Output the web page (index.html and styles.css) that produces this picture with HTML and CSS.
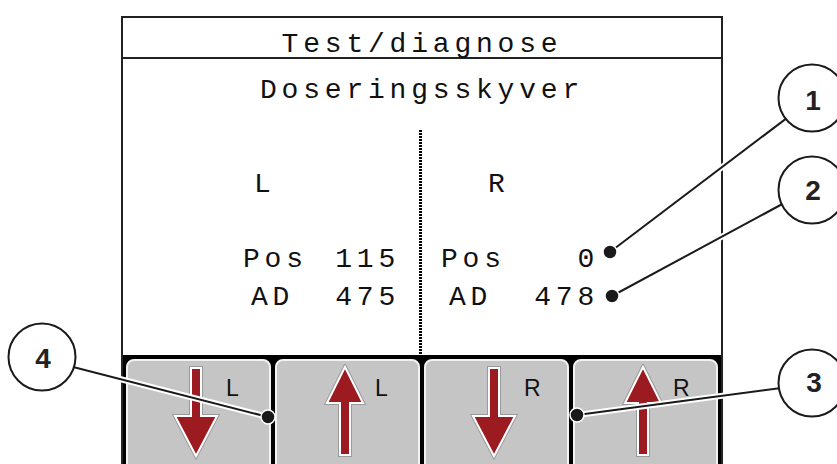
FILE: index.html
```html
<!DOCTYPE html>
<html lang="no">
<head>
<meta charset="utf-8">
<title>Test/diagnose - Doseringsskyver</title>
<link rel="stylesheet" href="styles.css">
</head>
<body>
<div id="page">
    <div id="screen">
        <div class="title">Test/diagnose</div>
        <div class="subtitle">Doseringsskyver</div>
        <div class="panes">
            <div class="pane left">
                <div class="side">L</div>
                <div class="row pos"><span>Pos</span><span>115</span></div>
                <div class="row ad"><span>AD</span><span>475</span></div>
            </div>
            <div class="divider"></div>
            <div class="pane right">
                <div class="side">R</div>
                <div class="row pos"><span>Pos</span><span>0</span></div>
                <div class="row ad"><span>AD</span><span>478</span></div>
            </div>
        </div>
        <div class="softkeys">
            <div class="key">
                <svg viewBox="0 0 48 96">
                    <polygon class="edge" points="19,4 29,4 29,52 45,52 24,92 3,52 19,52"/>
                    <polygon class="arrow" points="19,4 29,4 29,52 45,52 24,92 3,52 19,52"/>
                </svg>
                <span>L</span>
            </div>
            <div class="key">
                <svg viewBox="0 0 48 96">
                    <polygon class="edge" points="24,3 42,39 29,39 29,91 19,91 19,39 6,39"/>
                    <polygon class="arrow" points="24,3 42,39 29,39 29,91 19,91 19,39 6,39"/>
                </svg>
                <span>L</span>
            </div>
            <div class="key">
                <svg viewBox="0 0 48 96">
                    <polygon class="edge" points="19,4 29,4 29,52 45,52 24,92 3,52 19,52"/>
                    <polygon class="arrow" points="19,4 29,4 29,52 45,52 24,92 3,52 19,52"/>
                </svg>
                <span>R</span>
            </div>
            <div class="key">
                <svg viewBox="0 0 48 96">
                    <polygon class="edge" points="24,3 42,39 29,39 29,91 19,91 19,39 6,39"/>
                    <polygon class="arrow" points="24,3 42,39 29,39 29,91 19,91 19,39 6,39"/>
                </svg>
                <span>R</span>
            </div>
        </div>
    </div>

    <!-- nummererte henvisninger over skjermbildet -->
    <svg id="callouts" width="837" height="464" viewBox="0 0 837 464">
        <g class="halo">
            <line x1="610" y1="252" x2="812" y2="99"/>
            <line x1="612" y1="296" x2="812" y2="188"/>
            <line x1="577" y1="415" x2="812" y2="384"/>
            <line x1="268" y1="417" x2="42" y2="359"/>
        </g>
        <g class="lead">
            <line x1="610" y1="252" x2="812" y2="99"/>
            <line x1="612" y1="296" x2="812" y2="188"/>
            <line x1="577" y1="415" x2="812" y2="384"/>
            <line x1="268" y1="417" x2="42" y2="359"/>
        </g>
        <g class="dot">
            <circle cx="610" cy="252" r="7"/>
            <circle cx="612" cy="296" r="7"/>
            <circle cx="577" cy="415" r="7"/>
            <circle cx="268" cy="417" r="7"/>
        </g>
        <g class="badge">
            <circle cx="812" cy="98" r="33.5"/>
            <circle cx="812" cy="190" r="33.5"/>
            <circle cx="812" cy="383" r="33.5"/>
            <circle cx="42" cy="357" r="33.5"/>
            <text x="813" y="110">1</text>
            <text x="813" y="200">2</text>
            <text x="814" y="392">3</text>
            <text x="43" y="368">4</text>
        </g>
    </svg>
</div>
</body>
</html>
```

FILE: styles.css
```css
body {
    margin: 0;
    background: #fff;
    font-family: "Liberation Sans", Arial, sans-serif;
}

#page {
    position: relative;
    width: 837px;
    height: 464px;
    overflow: hidden;
}

#screen {
    display: flex;
    flex-direction: column;
    box-sizing: border-box;
    width: 602px;
    height: 448px;
    margin: 16px 0 0 121px;
    border: 2px solid #222;
    border-bottom: 0;
    font: 28px "Liberation Mono", "DejaVu Sans Mono", monospace;
    letter-spacing: 4.8px;
    color: #111;
}

.title {
    height: 25px;
    padding-top: 14px;
    line-height: 26px;
    text-align: center;
    border-bottom: 2px solid #222;
}

.subtitle {
    margin-top: 19px;
    line-height: 26px;
    text-align: center;
}

.panes {
    display: flex;
    height: 225px;
    margin-top: 26px;
}

.pane {
    box-sizing: border-box;
    padding-top: 42px;
    line-height: 26px;
}

.left {
    width: 296px;
    padding-left: 120px;
}
.left .side { padding-left: 11px; }
.left .row { width: 157px; }

.right {
    flex: 1;
    padding-left: 19px;
}
.right .side { padding-left: 47px; }
.right .row { width: 158px; }

.divider {
    width: 3px;
    background: repeating-linear-gradient(#000 0 2px, transparent 2px 3px);
}

.row {
    display: flex;
    justify-content: space-between;
}
.pos { margin-top: 49px; }
.ad { margin-top: 12px; }
.ad span:first-child { padding-left: 8px; }

.softkeys {
    flex: 1;
    min-height: 0;
    display: flex;
    gap: 4px;
    padding: 4px 3px 0;
    background: #000;
    overflow: hidden;
}

.key {
    flex: 1;
    flex-shrink: 0;
    display: flex;
    align-items: flex-start;
    height: 110px;
    padding: 3px 0 0 44px;
    border: 2px solid #f2f2f2;
    border-radius: 8px;
    background: #c5c5c5;
    font: 23px "Liberation Sans", Arial, sans-serif;
    letter-spacing: 0;
    color: #111;
}
.key svg {
    width: 48px;
    height: 96px;
    flex-shrink: 0;
}
.key span {
    margin: 13px 0 0 6px;
    line-height: 23px;
}

.arrow {
    fill: #9b1b20;
    stroke: #fff;
    stroke-width: 2;
}
.edge {
    fill: none;
    stroke: #9a9a9a;
    stroke-width: 4;
}

#callouts {
    position: absolute;
    top: 0;
    left: 0;
}
.halo line {
    stroke: #fff;
    stroke-width: 6;
}
.lead line {
    stroke: #1a1a1a;
    stroke-width: 2;
}
.dot circle {
    fill: #1a1a1a;
    stroke: #fff;
    stroke-width: 1.5;
}
.badge circle {
    fill: #fff;
    stroke: #1a1a1a;
    stroke-width: 2;
}
.badge text {
    font: bold 28px "Liberation Sans", Arial, sans-serif;
    text-anchor: middle;
    fill: #222;
}
```
